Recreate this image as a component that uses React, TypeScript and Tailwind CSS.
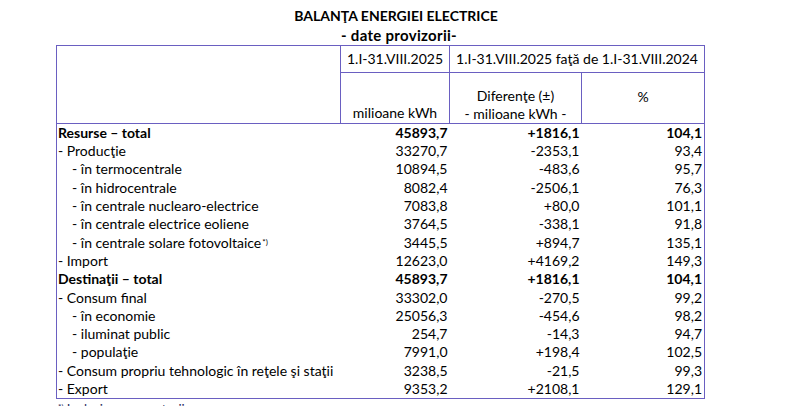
import React from 'react';

type Row = {
    label: React.ReactNode;
    value: string;
    diff: string;
    pct: string;
    bold?: boolean;
    indent?: boolean;
};

const rows: Row[] = [
    { label: 'Resurse – total', value: '45893,7', diff: '+1816,1', pct: '104,1', bold: true },
    { label: '- Producţie', value: '33270,7', diff: '-2353,1', pct: '93,4' },
    { label: '- în termocentrale', value: '10894,5', diff: '-483,6', pct: '95,7', indent: true },
    { label: '- în hidrocentrale', value: '8082,4', diff: '-2506,1', pct: '76,3', indent: true },
    { label: '- în centrale nuclearo-electrice', value: '7083,8', diff: '+80,0', pct: '101,1', indent: true },
    { label: '- în centrale electrice eoliene', value: '3764,5', diff: '-338,1', pct: '91,8', indent: true },
    {
        label: (
            <>
                - în centrale solare fotovoltaice<sup className="text-[8px] relative -top-[3px] ml-[1px]">*)</sup>
            </>
        ),
        value: '3445,5',
        diff: '+894,7',
        pct: '135,1',
        indent: true,
    },
    { label: '- Import', value: '12623,0', diff: '+4169,2', pct: '149,3' },
    { label: 'Destinaţii – total', value: '45893,7', diff: '+1816,1', pct: '104,1', bold: true },
    { label: '- Consum final', value: '33302,0', diff: '-270,5', pct: '99,2' },
    { label: '- în economie', value: '25056,3', diff: '-454,6', pct: '98,2', indent: true },
    { label: '- iluminat public', value: '254,7', diff: '-14,3', pct: '94,7', indent: true },
    { label: '- populaţie', value: '7991,0', diff: '+198,4', pct: '102,5', indent: true },
    { label: '- Consum propriu tehnologic în reţele şi staţii', value: '3238,5', diff: '-21,5', pct: '99,3' },
    { label: '- Export', value: '9353,2', diff: '+2108,1', pct: '129,1' },
];

export default function App() {
    return (
        <div className="w-[800px] h-[406px] overflow-hidden bg-white text-black font-['Lato','Liberation_Sans',sans-serif] text-[14px]">
            {/* Title */}
            <div className="pt-[6px] text-center font-bold leading-[19px]">
                <div className="text-[14px] pr-[8px]">BALANŢA ENERGIEI ELECTRICE</div>
                <div className="text-[15px] tracking-[0.3px] pr-[2px] mt-[1px]">- date provizorii-</div>
            </div>

            <table className="ml-[56px] border-collapse table-fixed w-[648px]">
                <colgroup>
                    <col className="w-[284px]" />
                    <col className="w-[109px]" />
                    <col className="w-[132px]" />
                    <col className="w-[123px]" />
                </colgroup>
                <thead>
                    <tr className="h-[27px]">
                        <td rowSpan={2} className="border border-[#6a5fc1]" />
                        <td className="border border-[#6a5fc1] text-center leading-none">1.I-31.VIII.2025</td>
                        <td colSpan={2} className="border border-[#6a5fc1] text-center leading-none">
                            1.I-31.VIII.2025 faţă de 1.I-31.VIII.2024
                        </td>
                    </tr>
                    <tr className="h-[51px]">
                        <td className="border border-[#6a5fc1] text-center align-bottom pb-[1px] leading-[18px]">
                            milioane kWh
                        </td>
                        <td className="border border-[#6a5fc1] text-center align-bottom leading-[18px]">
                            <div>Diferenţe (±)</div>
                            <div>- milioane kWh -</div>
                        </td>
                        <td className="border border-[#6a5fc1] text-center align-middle pb-[2px] leading-[18px]">%</td>
                    </tr>
                </thead>
                <tbody>
                    {rows.map((r, i) => (
                        <tr
                            key={i}
                            className={`h-[18.3px] leading-[18px] ${r.bold ? 'font-bold' : ''} ${
                                i === rows.length - 1 ? 'border-b border-[#6a5fc1]' : ''
                            }`}
                        >
                            <td className={`border-l border-[#6a5fc1] p-0 whitespace-nowrap ${r.indent ? 'pl-[15px]' : 'pl-[1px]'}`}>
                                {r.label}
                            </td>
                            <td className="p-0 pr-[2px] text-right">{r.value}</td>
                            <td className="p-0 pr-[2px] text-right">{r.diff}</td>
                            <td className="border-r border-[#6a5fc1] p-0 pr-[2px] text-right">{r.pct}</td>
                        </tr>
                    ))}
                </tbody>
            </table>

            {/* Footnote, cut off by the bottom edge as in the source */}
            <div className="ml-[58px] mt-[3px] text-[13px] leading-[14px] text-[#1f2a5c]">
                <sup className="text-[8px]">*)</sup> Inclusiv prosumatorii
            </div>
        </div>
    );
}
